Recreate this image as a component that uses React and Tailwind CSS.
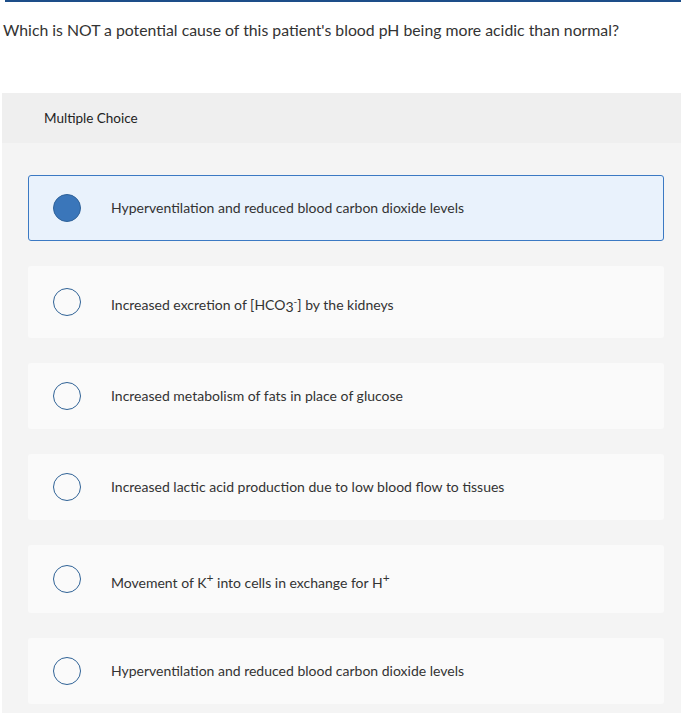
import React from "react";

const options = [
  { id: 1, h: "h-[66px]", content: "Hyperventilation and reduced blood carbon dioxide levels", selected: true },
  {
    id: 2,
    h: "h-[72px]",
    shift: "mt-[7px]",
    content: (
      <>
        Increased excretion of [HCO<span className="align-[-2px]">3</span>
        <sup className="text-[10px]">-</sup>] by the kidneys
      </>
    ),
  },
  { id: 3, h: "h-[66px]", content: "Increased metabolism of fats in place of glucose" },
  { id: 4, h: "h-[66px]", content: "Increased lactic acid production due to low blood flow to tissues" },
  {
    id: 5,
    h: "h-[68px]",
    shift: "mt-[7px]",
    content: (
      <>
        Movement of K<sup className="text-[12px]">+</sup> into cells in exchange for H<sup className="text-[12px]">+</sup>
      </>
    ),
  },
  { id: 6, h: "h-[66px]", content: "Hyperventilation and reduced blood carbon dioxide levels" },
];

function Option({ o }) {
  return (
    <div
      className={`${o.h} rounded-[3px] flex items-center gap-[30px] text-[14px] leading-[18px] ${
        o.selected ? "border border-[#3b79c3] bg-[#e9f2fc] pl-[24px]" : "bg-[#fafafa] pl-[25px]"
      }`}
    >
      <div
        className={`w-[28px] h-[28px] rounded-full shrink-0 ${
          o.selected ? "bg-[#3a76ba] border border-[#2f6299]" : "border-[1.5px] border-[#2f6296] bg-[#fafafa]"
        }`}
      />
      <div className={`text-[#333333] ${o.shift || ""}`}>{o.content}</div>
    </div>
  );
}

export default function App() {
  return (
    <div className="w-full min-h-[713px] bg-white font-['Lato',sans-serif] text-[#333333] flex flex-col">
      <div className="ml-[5px] h-[2px] bg-[#1d4e89]" />
      <div className="mt-[18px] pl-[3px] text-[15.8px] leading-[20px]">
        Which is NOT a potential cause of this patient's blood pH being more acidic than normal?
      </div>
      <div className="mt-[53px] ml-[2px] bg-[#f4f4f4] flex flex-col">
        <div className="h-[50px] bg-[#efefef] pl-[42px] flex items-center text-[13.5px] text-[#222222]">
          Multiple Choice
        </div>
        <div className="pt-[32px] pl-[26px] pr-[17px] pb-[20px] flex flex-col gap-[25px]">
          {options.map((o) => (
            <Option key={o.id} o={o} />
          ))}
        </div>
      </div>
    </div>
  );
}
